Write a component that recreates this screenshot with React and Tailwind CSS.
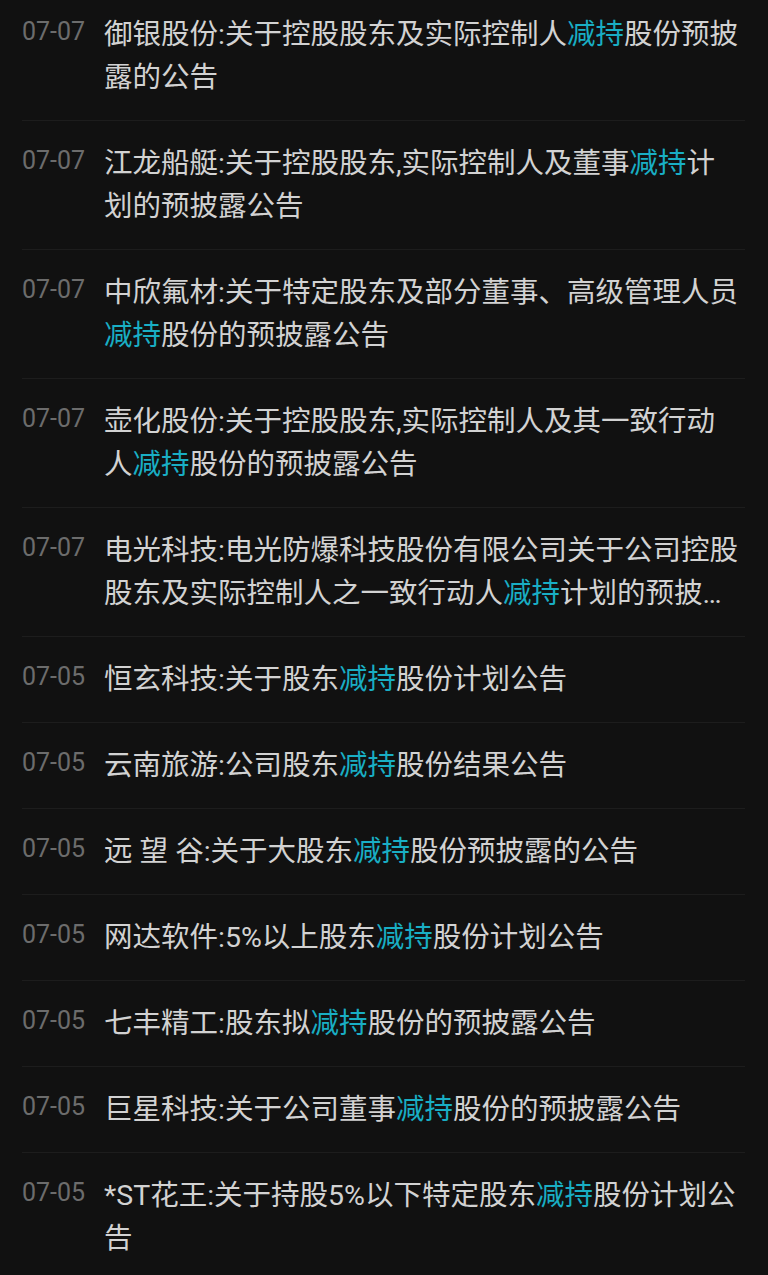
import React from "react";

const items = [
  { date: "07-07", pre: "御银股份:关于控股股东及实际控制人", post: "股份预披露的公告" },
  { date: "07-07", pre: "江龙船艇:关于控股股东,实际控制人及董事", post: "计划的预披露公告" },
  { date: "07-07", pre: "中欣氟材:关于特定股东及部分董事、高级管理人员", post: "股份的预披露公告" },
  { date: "07-07", pre: "壶化股份:关于控股股东,实际控制人及其一致行动人", post: "股份的预披露公告" },
  { date: "07-07", pre: "电光科技:电光防爆科技股份有限公司关于公司控股股东及实际控制人之一致行动人", post: "计划的预披露公告" },
  { date: "07-05", pre: "恒玄科技:关于股东", post: "股份计划公告" },
  { date: "07-05", pre: "云南旅游:公司股东", post: "股份结果公告" },
  { date: "07-05", pre: "远 望 谷:关于大股东", post: "股份预披露的公告" },
  { date: "07-05", pre: "网达软件:5%以上股东", post: "股份计划公告" },
  { date: "07-05", pre: "七丰精工:股东拟", post: "股份的预披露公告" },
  { date: "07-05", pre: "巨星科技:关于公司董事", post: "股份的预披露公告" },
  { date: "07-05", pre: "*ST花王:关于持股5%以下特定股东", post: "股份计划公告" },
];

export default function App() {
  return (
    <div className="min-h-screen bg-[#111111] overflow-hidden font-['Roboto','Noto_Sans_CJK_SC',sans-serif]">
      <ul className="mt-[-8px] pl-[22px] pr-[23px]">
        {items.map((it, i) => (
          <li key={i} className="flex border-b border-[#1d1d1d] py-[21px]">
            <div className="w-[82px] shrink-0 text-[25px] leading-[43px] text-[#6c6c6c] -mt-[3px]">
              {it.date}
            </div>
            <div className="flex-1 min-w-0 pr-[4px]">
              <p className="line-clamp-2 text-[28.5px] leading-[43px] text-[#d2d2d2]">
                {it.pre}
                <span className="text-[#19aec4]">减持</span>
                {it.post}
              </p>
            </div>
          </li>
        ))}
      </ul>
    </div>
  );
}
